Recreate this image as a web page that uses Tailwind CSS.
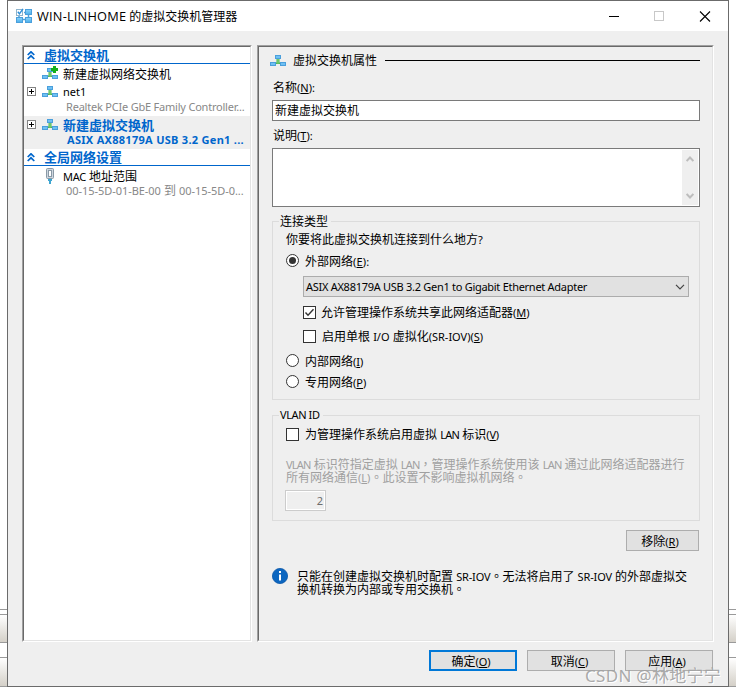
<!DOCTYPE html>
<html lang="zh-CN">
<head>
<meta charset="utf-8">
<title>WIN-LINHOME 的虚拟交换机管理器</title>
<script src="https://cdn.jsdelivr.net/npm/@tailwindcss/browser@4"></script>
</head>
<body class="relative w-[736px] h-[694px] overflow-hidden bg-white text-black text-[12px] leading-[16px] whitespace-nowrap font-['Noto_Sans','Noto_Sans_CJK_SC',sans-serif]">
<svg width="0" height="0" class="absolute">
  <defs>
    <linearGradient id="blue" x1="0" y1="0" x2="0" y2="1"><stop offset="0" stop-color="#8bd3fb"/><stop offset="1" stop-color="#4aaeea"/></linearGradient>
    <symbol id="switch" viewBox="0 0 16 11">
      <path d="M6.500 4h3v3.500h1V9h-5V7.500h1z" fill="#4fb257"/>
      <path d="M7.500 4h1v4.500h-1z" fill="#8ee07c"/>
      <rect x="5.500" y=".5" width="5" height="3" fill="#6fc0f2" stroke="#4a9fdc"/>
      <rect x=".5" y="7.500" width="5" height="3" fill="#6fc0f2" stroke="#4a9fdc"/>
      <rect x="10.500" y="7.500" width="5" height="3" fill="#6fc0f2" stroke="#4a9fdc"/>
    </symbol>
    <symbol id="chev" viewBox="0 0 8 9"><path d="M.7 4 4 .8 7.300 4M.7 8 4 4.800 7.300 8" fill="none" stroke="#0066cc" stroke-width="1.700"/></symbol>
    <symbol id="plus" viewBox="0 0 9 9"><rect x=".5" y=".5" width="8" height="8" fill="#fff" stroke="#848484"/><path d="M2 4.500h5M4.500 2v5" stroke="#000"/></symbol>
  </defs>
</svg>

<div class="flex h-full">
  <!-- Left sliver of the window behind -->
  <div class="w-[7px] pt-[609px] shrink-0">
    <div class="h-[6px] border-y border-[#9a9a9a]"></div>
    <div class="h-[28px] border-b border-[#9a9a9a] bg-linear-to-b from-white to-[#d4d0c8]"></div>
    <div class="h-[14px]"></div>
    <div class="h-[30px] border-y border-[#9a9a9a] bg-linear-to-b from-white to-[#d4d0c8]"></div>
  </div>

  <main class="w-[722px] h-[687px] shrink-0 border border-[#6b6b6b] bg-[#efefef] flex flex-col">
    <header class="h-[30px] bg-white flex items-center pl-[8px] shrink-0">
      <svg width="16" height="16" viewBox="0 0 16 16">
        <path d="M3 7.500v2M7 11.500h2M12.500 7v2M8 4.500h1" stroke="#4a9fdc" stroke-width="1.500"/>
        <rect x=".5" y="1.500" width="6" height="6" fill="#fff" stroke="#8fb4cc"/>
        <path d="M1.800 3.800 3.400 5.800 7 .8" fill="none" stroke="#2f8fd8" stroke-width="1.400"/>
        <rect x="9.500" y="1.500" width="6" height="5" fill="url(#blue)" stroke="#4a9fdc"/>
        <rect x=".5" y="9.500" width="6" height="5" fill="url(#blue)" stroke="#4a9fdc"/>
        <rect x="9.500" y="9.500" width="6" height="5" fill="url(#blue)" stroke="#4a9fdc"/>
      </svg>
      <h1 class="ml-[5px]"><span class="font-['Open_Sans'] text-[12.800px] tracking-[0.2px]">WIN-LINHOME</span> 的虚拟交换机管理器</h1>
      <svg class="ml-auto mr-[17px]" width="102" height="11" viewBox="0 0 102 11">
        <path d="M0 5.500h10" stroke="#000"/>
        <rect x="45.500" y=".5" width="9" height="9" fill="none" stroke="#c8c8c8"/>
        <path d="M91 .5l10 10M101 .5l-10 10" stroke="#000" stroke-width="1.100"/>
      </svg>
    </header>

    <div class="flex h-[597px] mt-[14px] pl-[14px] gap-[5px] shrink-0">
      <!-- Navigation tree -->
      <nav class="w-[230px] border border-t-[#a0a0a0] border-l-[#a0a0a0] border-b-white border-r-white">
        <div class="h-full bg-white border border-t-[#696969] border-l-[#696969] border-b-[#e3e3e3] border-r-[#e3e3e3]">
          <div class="h-[17px] border-b border-b-[#0066cc] flex items-center pl-[3px] text-[#0066cc] font-bold text-[13px]"><svg width="8" height="9"><use href="#chev"/></svg><span class="ml-[9px]">虚拟交换机</span></div>
          <div class="h-[19px] flex items-center pl-[18px]">
            <svg width="16" height="11" class="overflow-visible"><use href="#switch"/><path d="M12.500 -2v7M9 1.500h7" stroke="#14b01c" stroke-width="3"/></svg><span class="ml-[5px] pt-[2px]">新建虚拟网络交换机</span></div>
          <div class="h-[17px] flex items-center pl-[3px]"><svg width="9" height="9"><use href="#plus"/></svg><svg class="ml-[6px]" width="16" height="11"><use href="#switch"/></svg><span class="ml-[5px] text-[11px]">net1</span></div>
          <div class="h-[16px] pl-[42px] text-[11px] leading-[14px] tracking-[-0.21px] text-[#888]">Realtek PCIe GbE Family Controller...</div>
          <div class="h-[33px] bg-[#efefef] text-[#0066cc] font-bold">
            <div class="h-[17px] flex items-center pl-[3px]"><svg width="9" height="9"><use href="#plus"/></svg><svg class="ml-[6px]" width="16" height="11"><use href="#switch"/></svg><span class="ml-[5px] text-[13px]">新建虚拟交换机</span></div>
            <div class="h-[16px] pl-[43px] text-[11px] leading-[14px] tracking-[0.29px]">ASIX AX88179A USB 3.2 Gen1 ...</div>
          </div>
          <div class="h-[17px] border-b border-b-[#0066cc] flex items-center pl-[3px] text-[#0066cc] font-bold text-[13px]"><svg width="8" height="9"><use href="#chev"/></svg><span class="ml-[9px]">全局网络设置</span></div>
          <div class="h-[19px] flex items-center pl-[22px]">
            <svg width="8" height="16" viewBox="0 0 8 16"><rect x=".5" y=".5" width="7" height="10" rx="1" fill="#cdd6de" stroke="#8a99a6"/><rect x="2.500" y="2.500" width="3" height="6" fill="#fff" stroke="#8a99a6"/><path d="M2 11h4v2H5v3H3v-3H2z" fill="#3fa5d0"/></svg>
            <span class="ml-[9px] pt-[2px]"><span class="text-[11px] tracking-[-0.3px]">MAC</span> 地址范围</span></div>
          <div class="h-[16px] pl-[42px] leading-[12px] text-[#888]"><span class="text-[11px] tracking-[-0.05px]">00-15-5D-01-BE-00</span> 到 <span class="text-[11px] tracking-[-0.05px]">00-15-5D-0...</span></div>
        </div>
      </nav>

      <!-- Switch properties -->
      <section class="w-[457px] border border-t-[#a0a0a0] border-l-[#a0a0a0] border-b-white border-r-white">
        <div class="h-full border border-t-[#696969] border-l-[#696969] border-b-[#e3e3e3] border-r-[#e3e3e3] pl-[13px] pr-[12px]">
          <div class="h-[27px] -ml-[2px] flex items-center"><svg width="16" height="11"><use href="#switch"/></svg><span class="ml-[7px]">虚拟交换机属性</span><span class="ml-[8px] flex-1 h-px bg-black"></span></div>
          <div class="h-[26px] pt-[6px] pl-px">名称<span class="text-[11px]">(<u>N</u>):</span></div>
          <div class="h-[21px] border border-[#7a7a7a] bg-white pl-[2px] leading-[19px]">新建虚拟交换机</div>
          <div class="h-[27px] pt-[7px] pl-px">说明<span class="text-[11px]">(<u>T</u>):</span></div>
          <div class="h-[59px] border border-[#7a7a7a] bg-white p-px flex justify-end">
            <div class="w-[16px] bg-[#efefef] flex flex-col items-center justify-between py-[6px]">
              <svg width="8" height="6" viewBox="0 0 8 6"><path d="M.6 5 4 1.500 7.400 5" fill="none" stroke="#bdbdbd" stroke-width="2"/></svg>
              <svg width="8" height="6" viewBox="0 0 8 6"><path d="M.6 1 4 4.500 7.400 1" fill="none" stroke="#bdbdbd" stroke-width="2"/></svg>
            </div>
          </div>

          <div class="mt-[14px] h-[179px] border border-[#dcdcdc] pl-[13px]">
            <div class="h-[9px] -ml-[7px] flex items-start"><span class="-mt-[8px] pl-px pr-[3px] bg-[#efefef]">连接类型</span></div>
            <div class="h-[18px] leading-[18px]">你要将此虚拟交换机连接到什么地方<span class="text-[11px]">?</span></div>
            <div class="h-[27px] pb-[4px] flex items-center"><svg width="13" height="13" viewBox="0 0 13 13"><circle cx="6.500" cy="6.500" r="6" fill="#fff" stroke="#333"/><circle cx="6.500" cy="6.500" r="3.500" fill="#333"/></svg><span class="ml-[6px] pt-[2px]">外部网络<span class="text-[11px] tracking-[0.2px]">(<u>E</u>):</span></span></div>
            <div class="ml-[17px] w-[386px] h-[21px] border border-[#acacac] bg-[#e1e1e1] pl-[2px] pr-[3px] flex items-center justify-between text-[11px]"><span class="tracking-[-0.28px]">ASIX AX88179A USB 3.2 Gen1 to Gigabit Ethernet Adapter</span><svg width="10" height="6" viewBox="0 0 10 6"><path d="M1 .8 5 4.800 9 .8" fill="none" stroke="#444" stroke-width="1.200"/></svg></div>
            <div class="ml-[17px] h-[31px] flex items-center"><svg width="13" height="13" viewBox="0 0 13 13"><rect x=".5" y=".5" width="12" height="12" fill="#fff" stroke="#333"/><path d="M2.500 6.500 5 9.200 10.500 3.200" fill="none" stroke="#333" stroke-width="1.400"/></svg><span class="ml-[5px]">允许管理操作系统共享此网络适配器<span class="text-[11px]">(<u>M</u>)</span></span></div>
            <div class="ml-[17px] h-[17px] flex items-center"><span class="size-[13px] border border-[#333] bg-white"></span><span class="ml-[6px]">启用单根 <span class="text-[11px]">I/O</span> 虚拟化<span class="text-[11px]">(SR-IOV)(<u>S</u>)</span></span></div>
            <div class="h-[31px] flex items-center"><svg width="13" height="13" viewBox="0 0 13 13"><circle cx="6.500" cy="6.500" r="6" fill="#fff" stroke="#333"/></svg><span class="ml-[6px] pt-[2px]">内部网络<span class="text-[11px]">(<u>I</u>)</span></span></div>
            <div class="h-[11px] flex items-center"><svg width="13" height="13" viewBox="0 0 13 13"><circle cx="6.500" cy="6.500" r="6" fill="#fff" stroke="#333"/></svg><span class="ml-[6px] pt-[2px]">专用网络<span class="text-[11px]">(<u>P</u>)</span></span></div>
          </div>

          <div class="mt-[15px] h-[106px] border border-[#dcdcdc] pl-[13px]">
            <div class="h-[9px] -ml-[7px] flex items-start"><span class="-mt-[9px] pl-px pr-[3px] bg-[#efefef] text-[11px] tracking-[-0.4px]">VLAN ID</span></div>
            <div class="h-[19px] flex items-center"><span class="size-[13px] border border-[#333] bg-white"></span><span class="ml-[6px]">为管理操作系统启用虚拟 <span class="text-[11px] tracking-[-0.7px]">LAN</span> 标识<span class="text-[11px] tracking-[-0.2px]">(<u>V</u>)</span></span></div>
            <div class="mt-[13px] text-[#a0a0a0]">
              <p class="h-[13px] leading-[13px]"><span class="text-[11px] tracking-[-0.8px]">VLAN</span> 标识符指定虚拟 <span class="text-[11px] tracking-[-0.8px]">LAN</span><span lang="zh-TW" class="font-['Noto_Sans_CJK_TC']">，</span>管理操作系统使用该 <span class="text-[11px] tracking-[-0.8px]">LAN</span> 通过此网络适配器进行</p>
              <p class="h-[13px] leading-[13px]">所有网络通信<span class="text-[11px]">(<u>L</u>)</span><span lang="zh-TW" class="font-['Noto_Sans_CJK_TC']">。</span>此设置不影响虚拟机网络<span lang="zh-TW" class="font-['Noto_Sans_CJK_TC']">。</span></p>
            </div>
            <div class="mt-[7px] -ml-px w-[41px] h-[21px] border border-[#ccc] bg-white p-px"><div class="h-full bg-[#efefef] text-right pr-px leading-[17px] text-[11px] text-[#6d6d6d]">2</div></div>
          </div>

          <div class="mt-[9px] h-[21px] flex justify-end pr-px"><button class="w-[73px] border border-[#adadad] bg-[#e1e1e1] pr-[5px] pt-px leading-[19px]">移除<span class="text-[11px]">(<u>R</u>)</span></button></div>
          <div class="mt-[17px] flex items-start">
            <svg width="16" height="16" viewBox="0 0 16 16"><circle cx="8" cy="8" r="7.600" fill="#0c66c0" stroke="#0a57a8" stroke-width=".8"/><rect x="7" y="3" width="2" height="2" fill="#fff"/><path d="M7 6.500h2v6H7z" fill="#fff"/></svg>
            <div class="ml-[9px] mt-px leading-[13px]">
              <p class="h-[13px]">只能在创建虚拟交换机时配置 <span class="text-[11px] tracking-[-0.15px]">SR-IOV</span><span lang="zh-TW" class="font-['Noto_Sans_CJK_TC']">。</span>无法将启用了 <span class="text-[11px] tracking-[-0.15px]">SR-IOV</span> 的外部虚拟交</p>
              <p class="h-[13px]">换机转换为内部或专用交换机<span lang="zh-TW" class="font-['Noto_Sans_CJK_TC']">。</span></p>
            </div>
          </div>
        </div>
      </section>
    </div>

    <footer class="mt-[8px] h-[21px] flex justify-end gap-[10px] pr-[15px]">
      <button class="w-[88px] border-2 border-[#0078d7] bg-[#e1e1e1] pr-[4px] pt-px leading-[17px]">确定<span class="text-[11px]">(<u>O</u>)</span></button>
      <button class="w-[88px] border border-[#adadad] bg-[#e1e1e1] pr-[3px] pt-px leading-[19px]">取消<span class="text-[11px]">(<u>C</u>)</span></button>
      <button class="w-[88px] border border-[#adadad] bg-[#e1e1e1] pr-[4px] pt-px leading-[19px]">应用<span class="text-[11px]">(<u>A</u>)</span></button>
    </footer>
  </main>

  <!-- Right sliver of the window behind -->
  <div class="w-[7px] pt-[609px] shrink-0">
    <div class="h-[6px] border-y border-[#9a9a9a]"></div>
    <div class="h-[28px] border-b border-[#9a9a9a] bg-linear-to-b from-white to-[#d4d0c8]"></div>
    <div class="h-[14px]"></div>
    <div class="h-[30px] border-y border-[#9a9a9a] bg-linear-to-b from-white to-[#d4d0c8]"></div>
  </div>
</div>
<div class="absolute left-[585px] top-[664px] text-[17px] leading-[24px] tracking-[0.3px] text-[#a0a0a0]/90 [text-shadow:1px_1px_0_#fff] font-['Noto_Sans','Noto_Sans_CJK_SC',sans-serif]">CSDN @林地宁宁</div>
</body>
</html>
